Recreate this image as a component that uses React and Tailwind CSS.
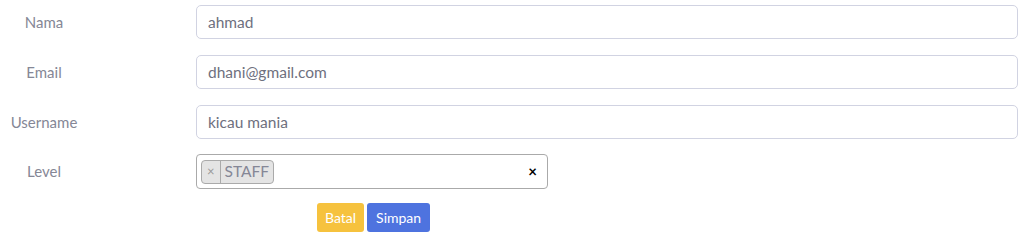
import React from 'react';

const fields = [
  { label: 'Nama', value: 'ahmad' },
  { label: 'Email', value: 'dhani@gmail.com' },
  { label: 'Username', value: 'kicau mania' },
];

export default function App() {
  return (
    <div className="bg-white w-[1024px] h-[247px] pt-[5px] text-[15px]" style={{ fontFamily: 'Lato, "Noto Sans", sans-serif' }}>
      {fields.map((f) => (
        <div key={f.label} className="flex items-center mb-[16px]">
          <label className="w-[88px] text-center text-[#858796]">{f.label}</label>
          <div className="ml-[108px] w-[822px]">
            <input
              defaultValue={f.value}
              className="block w-full h-[34px] px-[11px] border border-[#d1d3e2] rounded-[5px] text-[15.5px] text-[#6e707e] outline-none"
            />
          </div>
        </div>
      ))}

      <div className="flex items-center -mt-[1px]">
        <label className="w-[88px] text-center text-[#858796]">Level</label>
        <div className="ml-[108px] w-[352px] h-[35px] border border-[#aaaaaa] rounded-[4px] flex items-center pl-[4px] pr-[10px]">
          <span className="flex items-center h-[24px] bg-[#e4e4e4] border border-[#aaaaaa] rounded-[4px] text-[#858796]">
            <span className="px-[5px] h-full flex items-center border-r border-[#aaaaaa] text-[13px] text-[#999]">×</span>
            <span className="px-[4px] text-[15.5px]">STAFF</span>
          </span>
          <span className="ml-auto text-black text-[15px] font-bold">×</span>
        </div>
      </div>

      <div className="flex gap-[3px] pl-[317px] mt-[14px]">
        <button className="h-[29px] px-[8px] bg-[#f6c23e] text-white text-[14px] rounded-[3px]">Batal</button>
        <button className="h-[29px] px-[9px] bg-[#4e73df] text-white text-[14px] rounded-[3px]">Simpan</button>
      </div>
    </div>
  );
}
